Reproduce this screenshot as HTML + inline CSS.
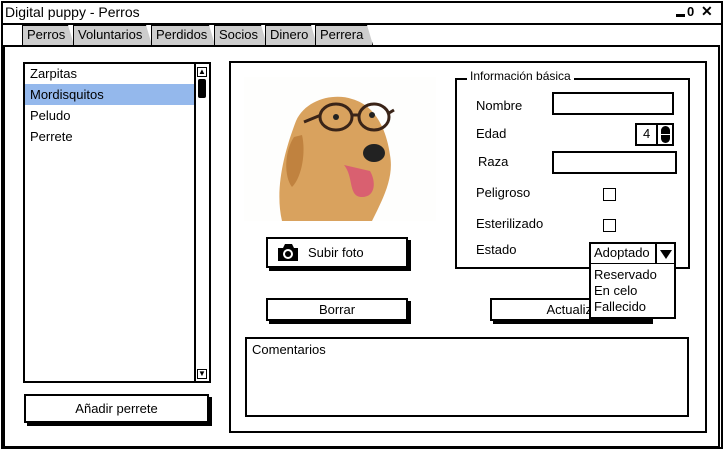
<!DOCTYPE html>
<html><head><meta charset="utf-8"><style>
*{margin:0;padding:0;box-sizing:border-box}
body{width:724px;height:451px;background:#fff;position:relative;overflow:hidden;font-family:"Liberation Sans",sans-serif;font-size:13px;color:#000}
.a{position:absolute}
.b{position:absolute;border:2px solid #000;background:#fff}
.t{position:absolute;white-space:nowrap}
.btn{position:absolute;border:2px solid #000;background:#fff;box-shadow:3px 3px 0 #000;text-align:center}
.tab{position:absolute;top:25px;height:20px;background:#cdcdcd;border:1px solid #000;border-bottom:none;padding:1px 0 0 4px;font-size:13px;clip-path:polygon(0 0,calc(100% - 6px) 0,100% 100%,0 100%)}
.cb{position:absolute;width:13px;height:13px;border:1px solid #000;background:#fff}
</style></head><body>
<div class="a" style="left:1px;top:1px;width:722px;height:448px;border:2px solid #000"></div>
<div class="t" style="left:5px;top:4px;font-size:14px">Digital puppy - Perros</div>
<div class="a" style="left:676px;top:14px;width:9px;height:3px;background:#000"></div>
<div class="t" style="left:687px;top:4px;font-size:13px;font-weight:bold">0</div>
<div class="t" style="left:701px;top:3px;font-size:14px;font-weight:bold">✕</div>
<div class="a" style="left:1px;top:23px;width:722px;height:2px;background:#000"></div>
<div class="tab" style="left:22px;width:52px">Perros</div>
<div class="tab" style="left:73px;width:79px">Voluntarios</div>
<div class="tab" style="left:151px;width:64px">Perdidos</div>
<div class="tab" style="left:214px;width:53px">Socios</div>
<div class="tab" style="left:265px;width:52px">Dinero</div>
<div class="tab" style="left:315px;width:58px">Perrera</div>
<div class="a" style="left:3px;top:45px;width:717px;height:403px;border:2px solid #000"></div>

<div class="b" style="left:23px;top:62px;width:188px;height:321px"></div>
<div class="a" style="left:25px;top:84px;width:170px;height:21px;background:#94b8ec"></div>
<div class="t" style="left:30px;top:66px">Zarpitas</div>
<div class="t" style="left:30px;top:87px">Mordisquitos</div>
<div class="t" style="left:30px;top:108px">Peludo</div>
<div class="t" style="left:30px;top:129px">Perrete</div>
<div class="a" style="left:194px;top:64px;width:2px;height:317px;background:#000"></div>
<div class="a" style="left:197px;top:67px;width:10px;height:10px;border:1px solid #000;font-size:8px;line-height:8px;text-align:center">▲</div>
<div class="a" style="left:198px;top:79px;width:8px;height:19px;background:#000;border-radius:2px"></div>
<div class="a" style="left:197px;top:369px;width:10px;height:10px;border:1px solid #000;font-size:8px;line-height:8px;text-align:center">▼</div>
<div class="btn" style="left:24px;top:394px;width:185px;height:29px;line-height:25px">Añadir perrete</div>

<div class="b" style="left:229px;top:61px;width:478px;height:372px"></div>
<svg class="a" style="left:244px;top:77px" width="192" height="144" viewBox="0 0 192 144">
<rect width="192" height="144" fill="#fefefd"/>
<path d="M38 144 C30 110 42 70 52 44 C62 22 90 16 108 22 C130 28 142 50 146 78 C150 100 140 120 128 144Z" fill="#d9a25e"/>
<path d="M50 60 C40 75 40 100 48 110 C58 100 62 75 58 58Z" fill="#c0823f"/>
<ellipse cx="92" cy="40" rx="16" ry="13" fill="none" stroke="#3a2418" stroke-width="3"/>
<ellipse cx="130" cy="40" rx="15" ry="13" fill="none" stroke="#3a2418" stroke-width="3"/>
<path d="M60 45 L77 38 M108 38 L115 38 M145 36 L150 33" stroke="#3a2418" stroke-width="3"/>
<circle cx="92" cy="40" r="3" fill="#222"/><circle cx="128" cy="38" r="3" fill="#222"/>
<ellipse cx="130" cy="76" rx="11" ry="9" fill="#222"/>
<path d="M100 88 C110 100 104 120 118 120 C132 120 132 104 126 94Z" fill="#d96070"/>
</svg>
<div class="btn" style="left:266px;top:237px;width:142px;height:31px;text-align:left">
<svg class="a" style="left:8px;top:4px" width="24" height="19" viewBox="0 0 24 19"><path d="M2 5 H7 L9 1 H16 L18 5 H22 V18 H2Z" fill="#000"/><circle cx="12" cy="11" r="5" fill="#fff"/><circle cx="12" cy="11" r="3" fill="#000"/></svg>
<span class="t" style="left:40px;top:6px">Subir foto</span></div>
<div class="btn" style="left:266px;top:298px;width:142px;height:23px;line-height:19px">Borrar</div>
<div class="btn" style="left:490px;top:298px;width:160px;height:23px;line-height:19px;padding-left:10px">Actualizar</div>

<div class="a" style="left:455px;top:78px;width:235px;height:191px;border:2px solid #000"></div>
<div class="t" style="left:467px;top:69px;background:#fff;padding:0 3px;font-size:12px">Información básica</div>
<div class="t" style="left:476px;top:98px">Nombre</div>
<div class="b" style="left:552px;top:92px;width:122px;height:23px"></div>
<div class="t" style="left:476px;top:126px">Edad</div>
<div class="b" style="left:635px;top:123px;width:39px;height:23px"></div>
<div class="t" style="left:643px;top:126px">4</div>
<div class="a" style="left:656px;top:124px;width:2px;height:21px;background:#000"></div>
<div class="a" style="left:661px;top:126px;width:9px;height:17px;background:#000;border-radius:5px"></div>
<div class="a" style="left:660px;top:134px;width:11px;height:1px;background:#fff"></div>
<div class="t" style="left:478px;top:154px">Raza</div>
<div class="b" style="left:552px;top:151px;width:125px;height:23px"></div>
<div class="t" style="left:476px;top:185px">Peligroso</div>
<div class="cb" style="left:603px;top:188px"></div>
<div class="t" style="left:476px;top:216px">Esterilizado</div>
<div class="cb" style="left:603px;top:219px"></div>
<div class="t" style="left:476px;top:242px">Estado</div>
<div class="b" style="left:589px;top:242px;width:87px;height:23px"></div>
<div class="t" style="left:594px;top:245px">Adoptado</div>
<div class="a" style="left:655px;top:243px;width:2px;height:21px;background:#000"></div>
<svg class="a" style="left:660px;top:249px" width="12" height="10" viewBox="0 0 12 10"><path d="M0 1 H12 L6 10Z" fill="#000"/></svg>
<div class="b" style="left:589px;top:264px;width:87px;height:55px;border-top:none"></div>
<div class="t" style="left:594px;top:267px">Reservado</div>
<div class="t" style="left:594px;top:283px">En celo</div>
<div class="t" style="left:594px;top:299px">Fallecido</div>

<div class="b" style="left:245px;top:337px;width:444px;height:80px"></div>
<div class="t" style="left:252px;top:342px">Comentarios</div>
</body></html>
